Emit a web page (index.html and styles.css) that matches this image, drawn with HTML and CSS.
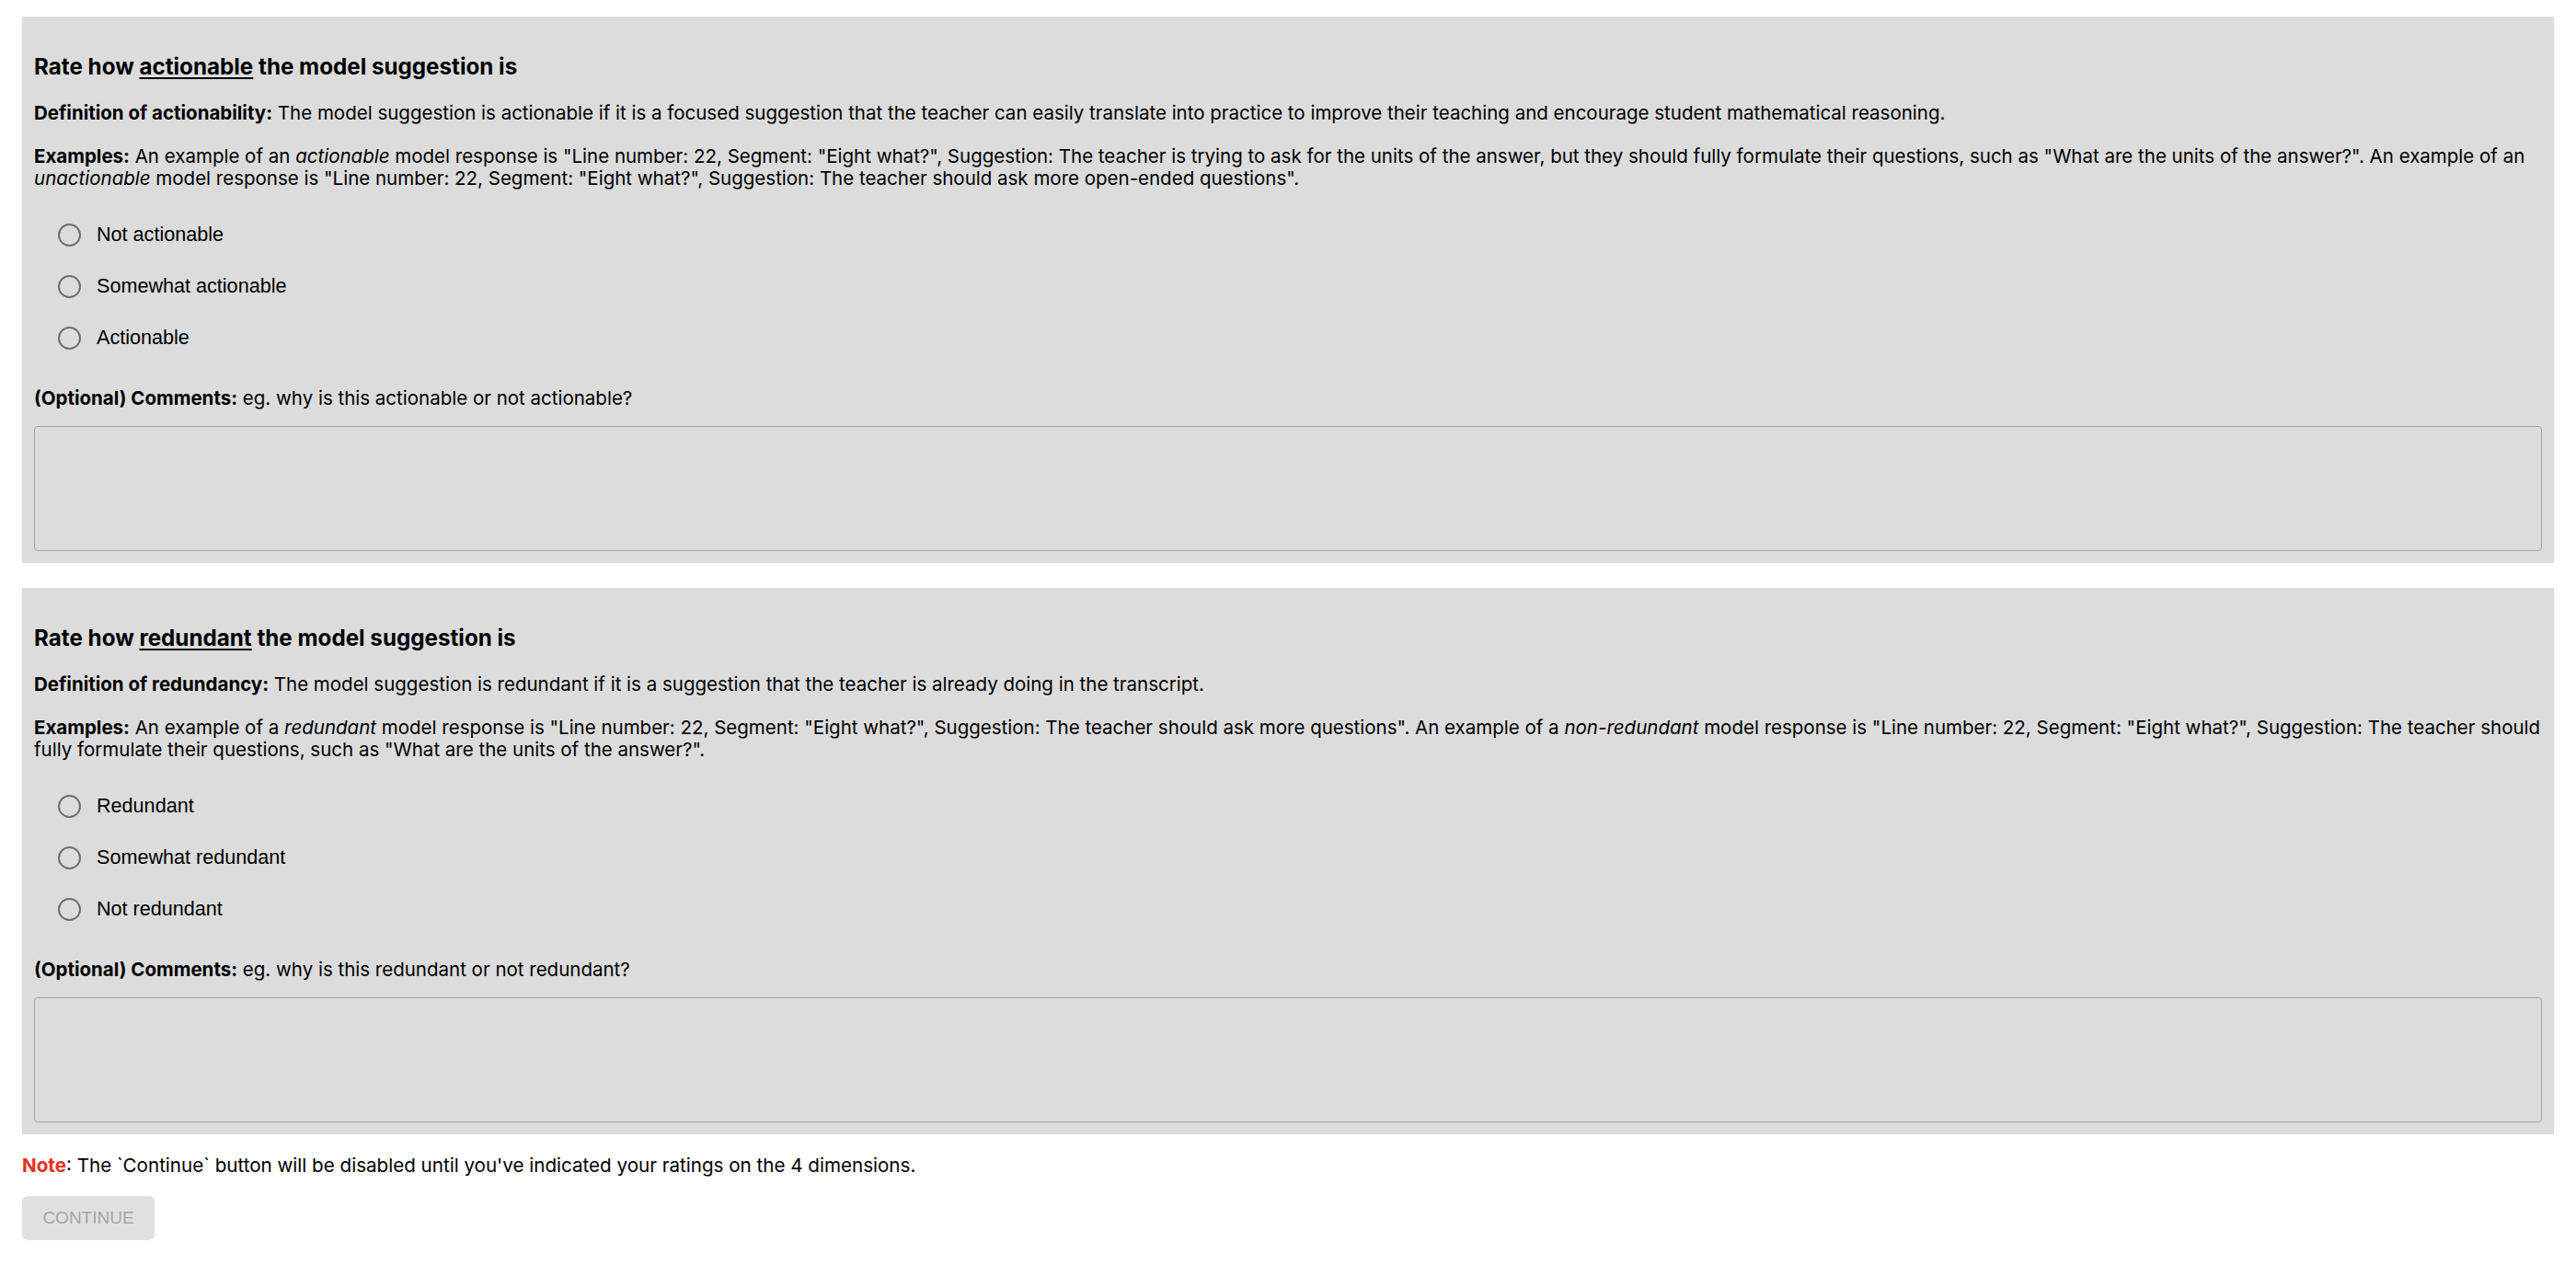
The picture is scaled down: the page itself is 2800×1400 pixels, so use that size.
FILE: index.html
```html
<!DOCTYPE html>
<html lang="en">
<head>
  <meta charset="UTF-8">
  <meta name="viewport" content="width=device-width, initial-scale=1.0">
  <title>Rate the model suggestion</title>
  <link rel="stylesheet" href="styles.css">
</head>
<body>
  <div class="rating-page">

    <section class="rating-section">
      <h3 class="rating-title">Rate how <u>actionable</u> the model suggestion is</h3>
      <p class="rating-text"><b>Definition of actionability:</b> The model suggestion is actionable if it is a focused suggestion that the teacher can easily translate into practice to improve their teaching and encourage student mathematical reasoning.</p>
      <p class="rating-text"><b>Examples:</b> An example of an <i>actionable</i> model response is "Line number: 22, Segment: "Eight what?", Suggestion: The teacher is trying to ask for the units of the answer, but they should fully formulate their questions, such as "What are the units of the answer?". An example of an <i>unactionable</i> model response is "Line number: 22, Segment: "Eight what?", Suggestion: The teacher should ask more open-ended questions".</p>
      <div class="rating-options">
        <label class="rating-option"><input type="radio" name="actionable" value="0"> Not actionable</label>
        <label class="rating-option"><input type="radio" name="actionable" value="1"> Somewhat actionable</label>
        <label class="rating-option"><input type="radio" name="actionable" value="2"> Actionable</label>
      </div>
      <p class="rating-text comments-label"><b>(Optional) Comments:</b> eg. why is this actionable or not actionable?</p>
      <textarea class="rating-comments"></textarea>
    </section>

    <section class="rating-section">
      <h3 class="rating-title">Rate how <u>redundant</u> the model suggestion is</h3>
      <p class="rating-text"><b>Definition of redundancy:</b> The model suggestion is redundant if it is a suggestion that the teacher is already doing in the transcript.</p>
      <p class="rating-text"><b>Examples:</b> An example of a <i>redundant</i> model response is "Line number: 22, Segment: "Eight what?", Suggestion: The teacher should ask more questions". An example of a <i>non-redundant</i> model response is "Line number: 22, Segment: "Eight what?", Suggestion: The teacher should fully formulate their questions, such as "What are the units of the answer?".</p>
      <div class="rating-options">
        <label class="rating-option"><input type="radio" name="redundant" value="0"> Redundant</label>
        <label class="rating-option"><input type="radio" name="redundant" value="1"> Somewhat redundant</label>
        <label class="rating-option"><input type="radio" name="redundant" value="2"> Not redundant</label>
      </div>
      <p class="rating-text comments-label"><b>(Optional) Comments:</b> eg. why is this redundant or not redundant?</p>
      <textarea class="rating-comments"></textarea>
    </section>

    <p class="note"><b class="note-label">Note</b>: The `Continue` button will be disabled until you've indicated your ratings on the 4 dimensions.</p>
    <button class="continue-btn" disabled>Continue</button>

  </div>
</body>
</html>
```

FILE: styles.css
```css
body {
  margin: 18px 24px;
  font-family: Inter, "Noto Sans", sans-serif;
  color: #000;
  background: #fff;
}
.rating-section {
  background: #dcdcdc;
  padding: 0 13px 13px;
  margin-bottom: 27px;
  display: flow-root;
}
.rating-title {
  font-size: 24.2px;
  line-height: 27px;
  font-weight: 700;
  margin: 41px 0 25px;
}
.rating-title u {
  text-underline-offset: 3px;
  text-decoration-thickness: 2px;
}
.rating-text {
  font-size: 20.5px;
  line-height: 24px;
  margin: 0 0 23px;
}
.rating-options {
  margin: -2px 0 26px 26px;
}
.rating-option {
  display: flex;
  align-items: center;
  height: 56px;
  gap: 17px;
  font-family: "Liberation Sans", Arial, sans-serif;
  font-size: 21.6px;
}
.rating-option input {
  appearance: none;
  width: 25px;
  height: 25px;
  margin: 0;
  border: 2px solid #6e6e6e;
  border-radius: 50%;
  background: transparent;
}
.comments-label {
  margin-bottom: 18px;
}
.rating-comments {
  display: block;
  box-sizing: border-box;
  width: 100%;
  height: 136px;
  margin: 0;
  border: 1px solid #a6a6a6;
  border-radius: 4px;
  background: transparent;
  resize: none;
}
.note {
  font-size: 20.6px;
  line-height: 24px;
  margin: -5px 0 21px;
}
.note-label {
  color: #e8301f;
}
.continue-btn {
  width: 144px;
  height: 48px;
  border: none;
  border-radius: 6px;
  background: #e0e0e0;
  color: #a6a6a6;
  font-family: "Liberation Sans", Arial, sans-serif;
  font-size: 19px;
  text-transform: uppercase;
}
```
